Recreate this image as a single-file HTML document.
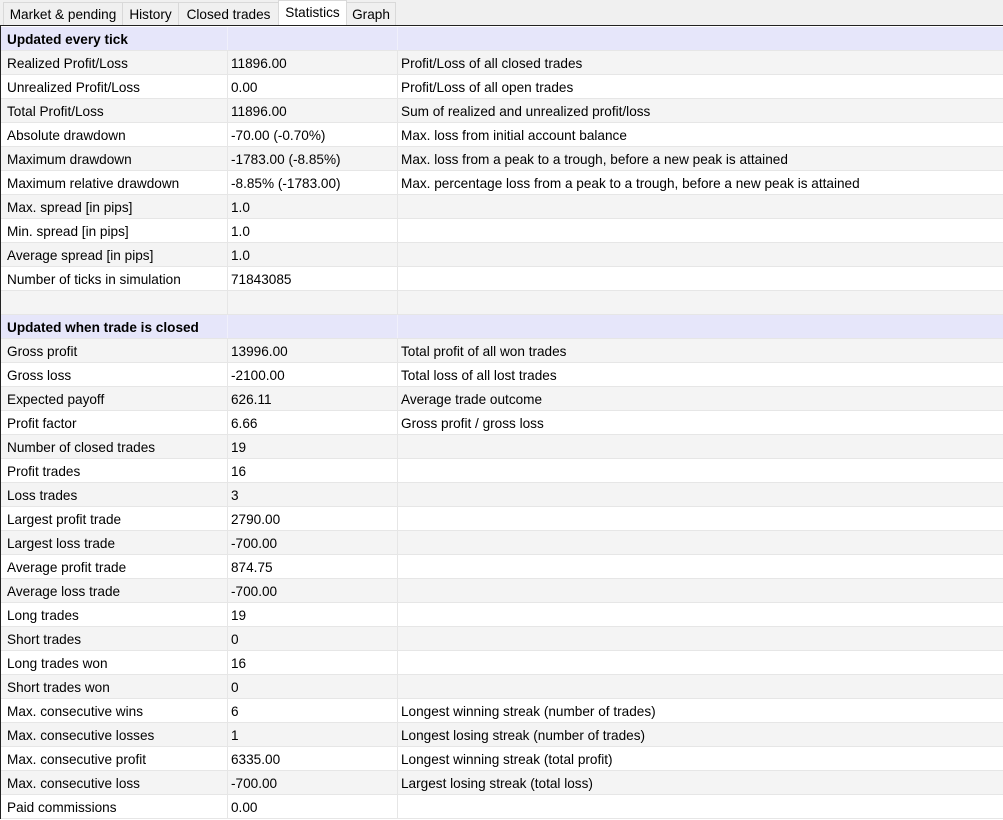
<!DOCTYPE html>
<html><head><style>
body{margin:0;width:1003px;height:819px;overflow:hidden;background:#fff;font-family:"Liberation Sans",sans-serif;font-size:13.6px;color:#000;position:relative}
.tabs{position:absolute;left:0;top:0;width:1003px;height:26px;background:#f0f0f0}
.tab{position:absolute;top:2px;height:23px;line-height:24px;border:1px solid #d9d9d9;border-bottom:none;background:#f0f0f0;text-align:center;box-sizing:border-box;white-space:nowrap}
.tab.a{top:0;height:26px;background:#fff;line-height:24px}
.tbl{position:absolute;left:0;top:25px;width:1003px;border-top:1px solid #222;border-left:1px solid #222;box-sizing:border-box;height:794px}
.r{height:24px;position:relative;border-bottom:1px solid #e6e6e6;box-sizing:border-box}
.r:first-child{margin-top:1px}
.r span{position:absolute;top:1px;line-height:24px;white-space:nowrap}
.c1{left:6px}.c2{left:230px}.c3{left:400px}
.r:before,.r:after{content:"";position:absolute;top:0;bottom:0;width:1px;background:#e6e6e6}
.r:before{left:226px}.r:after{left:396px}
.g{background:#f4f4f4}.h{background:#e6e6fa;font-weight:bold}
.h:before,.h:after{background:#f0f0fb}
</style></head><body>
<div class="tabs">
<div class="tab" style="left:3px;width:120px">Market &amp; pending</div>
<div class="tab" style="left:122px;width:57px">History</div>
<div class="tab" style="left:178px;width:101px">Closed trades</div>
<div class="tab a" style="left:278px;width:69px">Statistics</div>
<div class="tab" style="left:346px;width:50px">Graph</div>
</div>
<div class="tbl">
<div class="r h"><span class="c1">Updated every tick</span></div>
<div class="r g"><span class="c1">Realized Profit/Loss</span><span class="c2">11896.00</span><span class="c3">Profit/Loss of all closed trades</span></div>
<div class="r"><span class="c1">Unrealized Profit/Loss</span><span class="c2">0.00</span><span class="c3">Profit/Loss of all open trades</span></div>
<div class="r g"><span class="c1">Total Profit/Loss</span><span class="c2">11896.00</span><span class="c3">Sum of realized and unrealized profit/loss</span></div>
<div class="r"><span class="c1">Absolute drawdown</span><span class="c2">-70.00 (-0.70%)</span><span class="c3">Max. loss from initial account balance</span></div>
<div class="r g"><span class="c1">Maximum drawdown</span><span class="c2">-1783.00 (-8.85%)</span><span class="c3">Max. loss from a peak to a trough, before a new peak is attained</span></div>
<div class="r"><span class="c1">Maximum relative drawdown</span><span class="c2">-8.85% (-1783.00)</span><span class="c3">Max. percentage loss from a peak to a trough, before a new peak is attained</span></div>
<div class="r g"><span class="c1">Max. spread [in pips]</span><span class="c2">1.0</span></div>
<div class="r"><span class="c1">Min. spread [in pips]</span><span class="c2">1.0</span></div>
<div class="r g"><span class="c1">Average spread [in pips]</span><span class="c2">1.0</span></div>
<div class="r"><span class="c1">Number of ticks in simulation</span><span class="c2">71843085</span></div>
<div class="r g"></div>
<div class="r h"><span class="c1">Updated when trade is closed</span></div>
<div class="r g"><span class="c1">Gross profit</span><span class="c2">13996.00</span><span class="c3">Total profit of all won trades</span></div>
<div class="r"><span class="c1">Gross loss</span><span class="c2">-2100.00</span><span class="c3">Total loss of all lost trades</span></div>
<div class="r g"><span class="c1">Expected payoff</span><span class="c2">626.11</span><span class="c3">Average trade outcome</span></div>
<div class="r"><span class="c1">Profit factor</span><span class="c2">6.66</span><span class="c3">Gross profit / gross loss</span></div>
<div class="r g"><span class="c1">Number of closed trades</span><span class="c2">19</span></div>
<div class="r"><span class="c1">Profit trades</span><span class="c2">16</span></div>
<div class="r g"><span class="c1">Loss trades</span><span class="c2">3</span></div>
<div class="r"><span class="c1">Largest profit trade</span><span class="c2">2790.00</span></div>
<div class="r g"><span class="c1">Largest loss trade</span><span class="c2">-700.00</span></div>
<div class="r"><span class="c1">Average profit trade</span><span class="c2">874.75</span></div>
<div class="r g"><span class="c1">Average loss trade</span><span class="c2">-700.00</span></div>
<div class="r"><span class="c1">Long trades</span><span class="c2">19</span></div>
<div class="r g"><span class="c1">Short trades</span><span class="c2">0</span></div>
<div class="r"><span class="c1">Long trades won</span><span class="c2">16</span></div>
<div class="r g"><span class="c1">Short trades won</span><span class="c2">0</span></div>
<div class="r"><span class="c1">Max. consecutive wins</span><span class="c2">6</span><span class="c3">Longest winning streak (number of trades)</span></div>
<div class="r g"><span class="c1">Max. consecutive losses</span><span class="c2">1</span><span class="c3">Longest losing streak (number of trades)</span></div>
<div class="r"><span class="c1">Max. consecutive profit</span><span class="c2">6335.00</span><span class="c3">Longest winning streak (total profit)</span></div>
<div class="r g"><span class="c1">Max. consecutive loss</span><span class="c2">-700.00</span><span class="c3">Largest losing streak (total loss)</span></div>
<div class="r"><span class="c1">Paid commissions</span><span class="c2">0.00</span></div>
</div>
</body></html>
